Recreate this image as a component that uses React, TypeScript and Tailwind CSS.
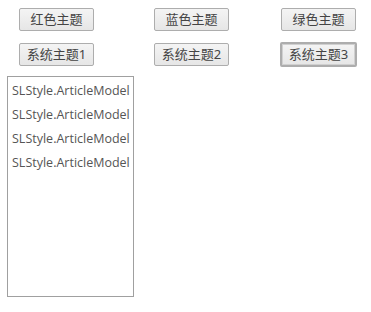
import React from "react";

const btn =
  "h-[23px] w-[75px] rounded-[2px] border border-[#adadad] bg-gradient-to-b from-[#f4f4f4] to-[#e6e6e6] text-[13px] leading-none text-[#444]";

const items = Array.from({ length: 4 }, () => "SLStyle.ArticleModel");

export default function App() {
  return (
    <div
      className="h-[312px] w-[371px] bg-white"
      style={{ fontFamily: '"Noto Sans", "Noto Sans CJK SC", sans-serif' }}
    >
      {/* Theme buttons */}
      <div className="flex pt-[8px] pl-[19px]">
        <button className={btn}>红色主题</button>
        <button className={`${btn} ml-[60px]`}>蓝色主题</button>
        <button className={`${btn} ml-[52px]`}>绿色主题</button>
      </div>
      <div className="flex pt-[12px] pl-[19px]">
        <button className={btn}>系统主题1</button>
        <button className={`${btn} ml-[60px]`}>系统主题2</button>
        <button
          className={`${btn} ml-[51px] -mt-px h-[25px] w-[77px] border-2 border-[#999] shadow-[inset_0_0_0_1px_#d0d0d0]`}
        >
          系统主题3
        </button>
      </div>

      {/* List box */}
      <div className="ml-[7px] mt-[9px] h-[221px] w-[127px] border border-[#a0a0a0] pt-[2px]">
        {items.map((t, i) => (
          <div
            key={i}
            className="flex h-[24px] items-center pl-[4px] text-[12.5px] text-[#555]"
            style={{ fontFamily: '"Open Sans", sans-serif' }}
          >
            {t}
          </div>
        ))}
      </div>
    </div>
  );
}
